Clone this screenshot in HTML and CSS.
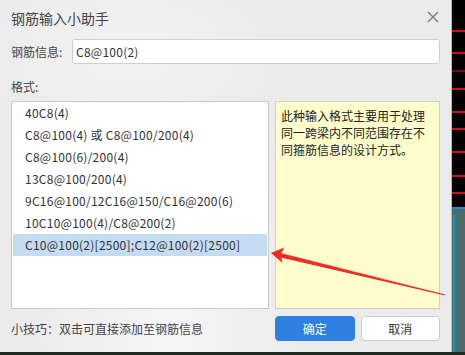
FILE: index.html
```html
<!DOCTYPE html>
<html lang="zh-CN">
<head>
  <meta charset="UTF-8" />
  <title>钢筋输入小助手</title>
  <link rel="stylesheet" href="styles.css">
</head>
<body>
  <div class="screen">
    <!-- dialog -->
    <div class="dialog">
      <div class="title-bar">
        <span class="title">钢筋输入小助手</span>
        <svg class="close" width="12" height="12" viewBox="0 0 12 12">
          <path d="M1 1 L11 11 M11 1 L1 11" stroke="#7a7a7a" stroke-width="1.3" fill="none" />
        </svg>
      </div>

      <div class="field-row">
        <label class="field-label">钢筋信息:</label>
        <div class="field-input">C8@100(2)</div>
      </div>

      <div class="format-label">格式:</div>

      <div class="panels">
        <ul class="format-list">
          <li>40C8(4)</li>
          <li>C8@100(4) 或 C8@100/200(4)</li>
          <li>C8@100(6)/200(4)</li>
          <li>13C8@100/200(4)</li>
          <li>9C16@100/12C16@150/C16@200(6)</li>
          <li>10C10@100(4)/C8@200(2)</li>
          <li class="selected">C10@100(2)[2500];C12@100(2)[2500]</li>
        </ul>
        <div class="hint">此种输入格式主要用于处理同一跨梁内不同范围存在不同箍筋信息的设计方式。</div>
      </div>

      <div class="footer">
        <span class="tip">小技巧：双击可直接添加至钢筋信息</span>
        <div class="buttons">
          <button class="btn btn-primary">确定</button>
          <button class="btn">取消</button>
        </div>
      </div>
    </div>

    <!-- what shows behind the dialog -->
    <div class="side">
      <div class="side-top"></div>
      <div class="side-bottom"></div>
    </div>
  </div>
  <div class="taskbar"></div>

  <!-- red annotation arrow -->
  <svg class="arrow" width="465" height="355" viewBox="0 0 465 355">
    <polygon points="278.5,252.6 445,294.6 444.8,295.5 277.5,256.8" fill="#f42a24" />
    <polygon points="271,253 284,247.5 280.5,255 282.5,263" fill="#f42a24" />
  </svg>
</body>
</html>
```

FILE: styles.css
```css
* {
  margin: 0;
  padding: 0;
  box-sizing: border-box;
}

html, body {
  width: 465px;
  height: 355px;
  overflow: hidden;
  background-color: #000;
  font-family: "Microsoft YaHei", "Noto Sans CJK SC", sans-serif;
  font-size: 12px;
  color: #333;
}

.screen {
  display: flex;
  height: 352px;
}

/* 🔹 Dialog */
.dialog {
  width: 452px;
  flex-shrink: 0;
  display: flex;
  flex-direction: column;
  padding: 0 11px 0 11px;
  border-right: 1px solid #b9b9b9;
  background:
    radial-gradient(ellipse 140px 220px at 170px 330px, #f6f6f6, rgba(246, 246, 246, 0)),
    radial-gradient(ellipse 160px 90px at 130px 60px, #f3f3f3, rgba(243, 243, 243, 0)),
    #ebebeb;
}

.title-bar {
  height: 36px;
  display: flex;
  align-items: center;
  justify-content: space-between;
}

.title {
  font-size: 14px;
  color: #444;
}

.close {
  margin-right: 1px;
  margin-top: -2px;
}

.field-row {
  display: flex;
  align-items: center;
  margin-top: 3px;
  height: 25px;
}

.field-label {
  width: 61px;
  color: #444;
}

.field-input {
  flex: 1;
  height: 25px;
  line-height: 23px;
  padding-left: 3px;
  background: #fff;
  border: 1px solid #cfcfcf;
  border-radius: 3px;
  color: #333;
  letter-spacing: 0.25px;
}

.format-label {
  height: 37px;
  display: flex;
  align-items: flex-end;
  padding-bottom: 6px;
  color: #444;
}

/* 🔹 Two panels */
.panels {
  display: flex;
  gap: 6px;
  height: 208px;
}

.format-list {
  list-style: none;
  width: 258px;
  flex-shrink: 0;
  background: #fff;
  border: 1px solid #c9c9c9;
  padding: 0 1px;
}

.format-list li {
  height: 22px;
  line-height: 22px;
  padding-left: 12px;
  white-space: nowrap;
  color: #333;
  letter-spacing: 0.25px;
}

.format-list li.selected {
  background-color: #c4dbf1;
}

.hint {
  flex: 1;
  background: #fffdcc;
  border: 1px solid #cfcfcf;
  padding: 5px 5px 0 5px;
  line-height: 17px;
  color: #222;
}

/* 🔹 Footer */
.footer {
  display: flex;
  align-items: center;
  height: 40px;
  padding-bottom: 6px;
  margin-top: 2px;
}

.tip {
  flex: 1;
  color: #444;
}

.buttons {
  display: flex;
  gap: 6px;
  width: 165px;
}

.btn {
  flex: 1;
  height: 25px;
  font-family: inherit;
  font-size: 12px;
  color: #333;
  background: #fff;
  border: 1px solid #cdcdcd;
  border-radius: 4px;
}

.btn-primary {
  background: #2f80e0;
  border-color: #2f80e0;
  color: #fff;
}

/* 🔹 Background app behind the dialog */
.side {
  flex: 1;
  display: flex;
  flex-direction: column;
}

.side-top {
  height: 207px;
  background:
    linear-gradient(#d01010, #d01010) 0 30px / 100% 2px no-repeat,
    linear-gradient(#d01010, #d01010) 0 52px / 100% 2px no-repeat,
    linear-gradient(#7a0a0a, #7a0a0a) 0 70px / 100% 2px no-repeat,
    linear-gradient(#d01010, #d01010) 0 88px / 100% 2px no-repeat,
    linear-gradient(#d01010, #d01010) 0 111px / 100% 2px no-repeat,
    linear-gradient(#d01010, #d01010) 0 128px / 100% 2px no-repeat,
    linear-gradient(#d01010, #d01010) 0 151px / 100% 2px no-repeat,
    linear-gradient(#d01010, #d01010) 0 175px / 100% 2px no-repeat,
    linear-gradient(#d01010, #d01010) 0 192px / 100% 2px no-repeat,
    #000;
}

.side-bottom {
  flex: 1;
  border-top: 2px solid #1a8fd0;
  background:
    linear-gradient(#1a8fd0, #1a8fd0) 1px 5px / 2px 100% no-repeat,
    #4f6c69;
}

.taskbar {
  height: 3px;
  background: #1e2a22;
}

.arrow {
  position: absolute;
  top: 0;
  left: 0;
  pointer-events: none;
}
```
